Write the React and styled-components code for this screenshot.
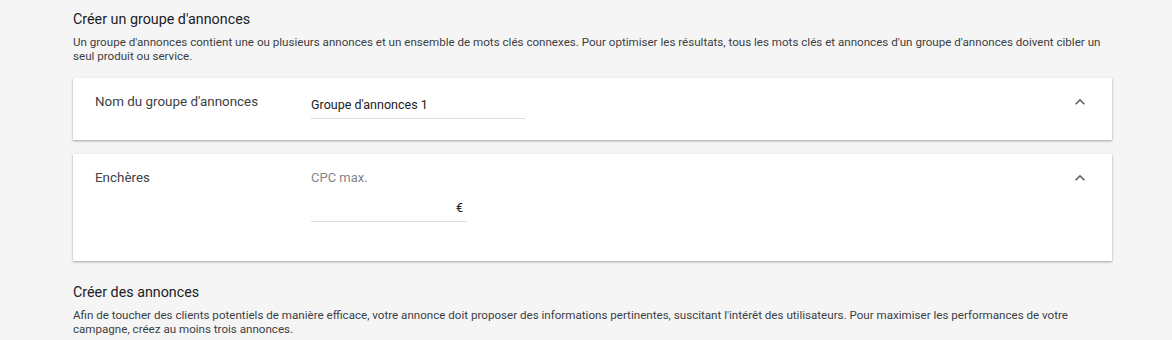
import React from 'react';
import styled, { createGlobalStyle } from 'styled-components';

const Global = createGlobalStyle`
  body {
    margin: 0;
    background: #f5f5f5;
    font-family: Roboto, "Noto Sans", Arial, sans-serif;
    color: #202124;
  }
`;

const Page = styled.div`
  width: 1039px;
  padding: 11px 0 0 73px;
`;

const Heading = styled.div`
  font-size: 14.3px;
  line-height: 17px;
  color: #202124;
  margin-top: ${(p) => p.top || 0}px;
`;

const Desc = styled.div`
  font-size: 11.6px;
  line-height: 13.7px;
  color: #3c4043;
  margin-top: 8px;
`;

const Card = styled.div`
  background: #fff;
  box-shadow: 0 1px 2px rgba(0, 0, 0, 0.28), 0 1px 3px rgba(0, 0, 0, 0.08);
  margin-top: ${(p) => p.top}px;
  height: ${(p) => p.height}px;
  box-sizing: border-box;
  padding: 16px 22px 0 22px;
  display: flex;
  align-items: flex-start;
`;

const Label = styled.div`
  width: 216px;
  font-size: 13.4px;
  line-height: 16px;
  color: #3c4043;
  flex-shrink: 0;
`;

const Field = styled.div`
  flex: 1;
  display: flex;
  flex-direction: column;
`;

const Hint = styled.div`
  font-size: 13px;
  line-height: 16px;
  color: #80868b;
  margin-bottom: 11px;
`;

const Input = styled.div`
  width: ${(p) => p.width}px;
  box-sizing: border-box;
  font-size: 12.5px;
  line-height: 16px;
  color: #202124;
  padding: 3px 4px 5px 0;
  border-bottom: 1px solid #dadce0;
  display: flex;
  justify-content: ${(p) => (p.right ? 'flex-end' : 'flex-start')};
`;

const Toggle = styled.button`
  border: 0;
  background: transparent;
  padding: 0;
  margin: -2px 0 0 0;
  width: 20px;
  height: 20px;
  cursor: pointer;
  display: flex;
  align-items: center;
  justify-content: center;
`;

const Chevron = () => (
  <svg width="20" height="20" viewBox="0 0 24 24">
    <path d="M12 8l-6 6 1.41 1.41L12 10.83l4.59 4.58L18 14z" fill="#5f6368" />
  </svg>
);

export default function App() {
  return (
    <Page>
      <Global />
      <Heading>Créer un groupe d'annonces</Heading>
      <Desc>
        Un groupe d'annonces contient une ou plusieurs annonces et un ensemble de mots clés connexes. Pour optimiser les résultats, tous les mots clés et annonces d'un groupe d'annonces doivent cibler un seul produit ou service.
      </Desc>
      <Card top={15} height={62}>
        <Label>Nom du groupe d'annonces</Label>
        <Field>
          <Input width={214}>Groupe d'annonces 1</Input>
        </Field>
        <Toggle><Chevron /></Toggle>
      </Card>
      <Card top={14} height={107}>
        <Label>Enchères</Label>
        <Field>
          <Hint>CPC max.</Hint>
          <Input width={156} right>€</Input>
        </Field>
        <Toggle><Chevron /></Toggle>
      </Card>
      <Heading top={23}>Créer des annonces</Heading>
      <Desc>
        Afin de toucher des clients potentiels de manière efficace, votre annonce doit proposer des informations pertinentes, suscitant l'intérêt des utilisateurs. Pour maximiser les performances de votre campagne, créez au moins trois annonces.
      </Desc>
    </Page>
  );
}
